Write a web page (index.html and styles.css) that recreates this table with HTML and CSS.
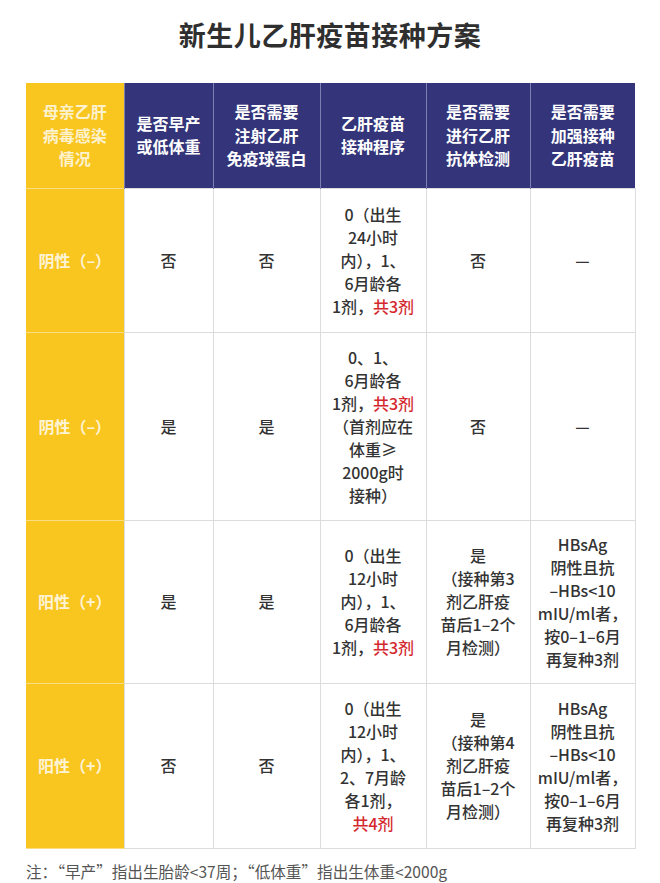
FILE: index.html
```html
<!DOCTYPE html>
<html lang="zh-CN">
<head>
<meta charset="utf-8">
<title>新生儿乙肝疫苗接种方案</title>
<link rel="stylesheet" href="styles.css">
</head>
<body>
<div class="page">
  <h1 class="title">新生儿乙肝疫苗接种方案</h1>
  <table class="plan">
    <colgroup>
      <col class="c1"><col class="c2"><col class="c3"><col class="c4"><col class="c5"><col class="c6">
    </colgroup>
    <thead>
      <tr class="head">
        <th class="mom">母亲乙肝<br>病毒感染<br>情况</th>
        <th>是否早产<br>或低体重</th>
        <th>是否需要<br>注射乙肝<br>免疫球蛋白</th>
        <th>乙肝疫苗<br>接种程序</th>
        <th>是否需要<br>进行乙肝<br>抗体检测</th>
        <th>是否需要<br>加强接种<br>乙肝疫苗</th>
      </tr>
    </thead>
    <tbody>
      <tr class="r1">
        <td class="mom">阴性（–）</td>
        <td>否</td>
        <td>否</td>
        <td>0（出生<br>24小时<br>内），1、<br>6月龄各<br>1剂，<span class="red">共3剂</span></td>
        <td>否</td>
        <td>—</td>
      </tr>
      <tr class="r2">
        <td class="mom">阴性（–）</td>
        <td>是</td>
        <td>是</td>
        <td>0、1、<br>6月龄各<br>1剂，<span class="red">共3剂</span><br>（首剂应在<br>体重≥<br>2000g时<br>接种）</td>
        <td>否</td>
        <td>—</td>
      </tr>
      <tr class="r3">
        <td class="mom">阳性（+）</td>
        <td>是</td>
        <td>是</td>
        <td>0（出生<br>12小时<br>内），1、<br>6月龄各<br>1剂，<span class="red">共3剂</span></td>
        <td>是<br>（接种第3<br>剂乙肝疫<br>苗后1–2个<br>月检测）</td>
        <td>HBsAg<br>阴性且抗<br>–HBs&lt;10<br>mIU/ml者，<br>按0–1–6月<br>再复种3剂</td>
      </tr>
      <tr class="r4">
        <td class="mom">阳性（+）</td>
        <td>否</td>
        <td>否</td>
        <td>0（出生<br>12小时<br>内），1、<br>2、7月龄<br>各1剂，<br><span class="red">共4剂</span></td>
        <td>是<br>（接种第4<br>剂乙肝疫<br>苗后1–2个<br>月检测）</td>
        <td>HBsAg<br>阴性且抗<br>–HBs&lt;10<br>mIU/ml者，<br>按0–1–6月<br>再复种3剂</td>
      </tr>
    </tbody>
  </table>
  <p class="note">注：“早产”指出生胎龄&lt;37周；“低体重”指出生体重&lt;2000g</p>
</div>
</body>
</html>
```

FILE: styles.css
```css
html, body {
  margin: 0;
  padding: 0;
  background: #ffffff;
}

.page {
  width: 660px;
  font-family: "Noto Sans CJK SC", "Noto Sans", sans-serif;
  color: #333333;
}

.title {
  margin: 0;
  padding-top: 17px;
  height: 66px;
  line-height: 36px;
  font-size: 27px;
  font-weight: 700;
  text-align: center;
  color: #2f2f2f;
  letter-spacing: 0.5px;
}

.plan {
  margin-left: 26px;
  width: 609px;
  table-layout: fixed;
  border-collapse: collapse;
}

.c1 { width: 98px; }
.c2 { width: 89px; }
.c3 { width: 107px; }
.c4 { width: 106px; }
.c5 { width: 104px; }
.c6 { width: 105px; }

.plan th,
.plan td {
  padding: 0 2px;
  text-align: center;
  vertical-align: middle;
}

.head {
  height: 105px;
}

.plan th {
  background: #33347a;
  color: #ffffff;
  font-size: 16px;
  font-weight: 700;
  line-height: 23.5px;
  border-left: 1px solid #7d7fb1;
}

.plan th.mom {
  background: #f9c51f;
  color: rgba(255, 255, 255, 0.78);
  border-left: none;
}

.plan td {
  font-size: 16px;
  font-weight: 500;
  line-height: 23px;
  color: #333333;
  border: 1px solid #dcdcdf;
}

.plan td.mom {
  background: #f9c51f;
  color: rgba(255, 255, 255, 0.82);
  font-weight: 700;
  border-left: none;
  border-top: 1px solid #fbdc82;
  border-bottom: 1px solid #fbdc82;
  border-right: none;
}

.r1 { height: 144px; }
.r2 { height: 188px; }
.r3 { height: 163px; }
.r4 { height: 165px; }

.red {
  color: #d4282e;
}

.note {
  margin: 11px 0 0 26px;
  font-size: 15.6px;
  line-height: 22px;
  color: #555555;
}
```
